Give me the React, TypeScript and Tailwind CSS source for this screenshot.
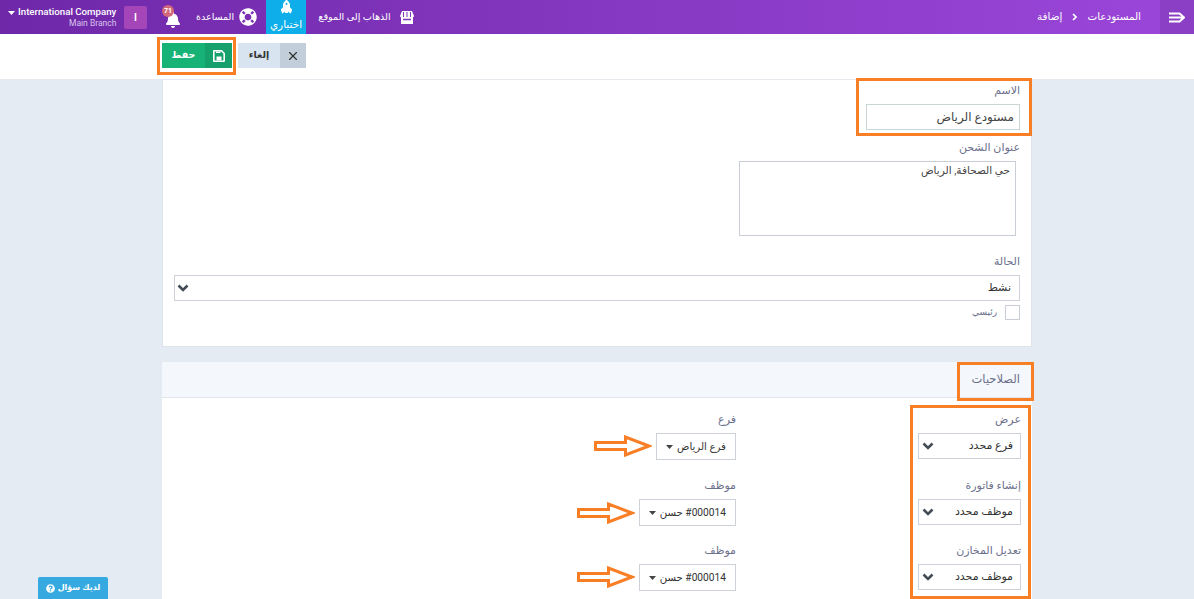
import { FaBell, FaLifeRing, FaQuestionCircle, FaRocket } from "react-icons/fa";
import { LuX } from "react-icons/lu";

const FONT = "font-['Roboto','DejaVu_Sans',sans-serif]";

function Chevron() {
  return (
    <svg width="12" height="8" viewBox="0 0 12 8" className="shrink-0">
      <path d="M1.500 1.500 6 6l4.500-4.500" fill="none" stroke="#444c58" strokeWidth="2.600" />
    </svg>
  );
}

function Caret({ color = "#444" }: { color?: string }) {
  return (
    <svg width="7" height="4" viewBox="0 0 7 4" className="shrink-0">
      <path d="M0 0h7L3.500 4z" fill={color} />
    </svg>
  );
}

function Label({ children }: { children: React.ReactNode }) {
  return <div className="whitespace-nowrap text-[11px] leading-[14px] text-[#6b6f8c]">{children}</div>;
}

function NativeSelect({ value, className }: { value: string; className: string }) {
  return (
    <div className={`flex items-center justify-between border border-[#cdd2d9] bg-white pr-[7px] pl-[3px] text-[11px] whitespace-nowrap text-[#333] ${className}`}>
      <span>{value}</span>
      <Chevron />
    </div>
  );
}

function Dropdown({ value, className }: { value: string; className: string }) {
  return (
    <div className={`flex items-center gap-[4px] border border-[#cdd2d9] bg-white pr-[9px] pl-[6px] text-[10.200px] whitespace-nowrap text-[#333] ${className}`}>
      <span>{value}</span>
      <Caret />
    </div>
  );
}

function PermRow({ label, value, subLabel, subValue, subWidth, className }: { label: string; value: string; subLabel: string; subValue: string; subWidth: string; className: string }) {
  return (
    <div className={`grid grid-cols-[285px_auto] ${className}`}>
      <div>
        <Label>{label}</Label>
        <NativeSelect value={value} className="mt-[6px] h-[26px] w-[103px]" />
      </div>
      <div>
        <Label>{subLabel}</Label>
        <Dropdown value={subValue} className={`mt-[6px] h-[27px] ${subWidth}`} />
      </div>
    </div>
  );
}

function Arrow({ className }: { className: string }) {
  return (
    <svg width="58" height="22" viewBox="0 0 58 22" className={`absolute ${className}`}>
      <path d="M1.500 7.500h30V2L55 11 31.500 20v-5.500h-30z" fill="#fff" stroke="#f97f26" strokeWidth="3" />
    </svg>
  );
}

function ShopIcon() {
  return (
    <svg width="14" height="13" viewBox="0 0 14 13">
      <path d="M2 0h10l2 5a1.500 1.500 0 0 1-1 1.300V13H1V6.300A1.500 1.500 0 0 1 0 5z" fill="#fff" />
      <path d="M3.500 1v5M7 1v5M10.500 1v5" stroke="#8037b8" strokeWidth="1" />
      <path d="M3 8.500h8" stroke="#8037b8" strokeWidth="1.500" />
    </svg>
  );
}

function TopBar() {
  return (
    <header className="flex h-[34px] items-stretch justify-between bg-gradient-to-r from-[#6f28a8] to-[#9b47da] text-white">
      <div className="flex items-stretch">
        <div className="ml-[8px] flex w-[108px] items-center gap-[3px]">
          <span className="-mt-[9px]"><Caret color="#fff" /></span>
          <div className="flex-1 text-right whitespace-nowrap">
            <div className="text-[9.700px] leading-[13px] font-medium">International Company</div>
            <div className="text-[8.500px] leading-[11px] text-[#d9c3ec]">Main Branch</div>
          </div>
        </div>
        <div className="mt-[6px] ml-[8px] flex h-[23px] w-[23px] items-center justify-center rounded-[2px] bg-[#a546b8] text-[10px] font-bold">I</div>
        <div className="relative ml-[16px] flex w-[20px] items-center justify-center">
          <FaBell size={16} className="mt-[5px]" />
          <span className="absolute top-[5px] -left-[1px] flex h-[12px] w-[12px] items-center justify-center rounded-full bg-[#d2697b] text-[7px] font-bold">71</span>
        </div>
        <div className="ml-[13px] flex items-center gap-[6px] whitespace-nowrap">
          <span className="w-[37px] text-center text-[9.500px]">المساعدة</span>
          <FaLifeRing size={18} />
        </div>
        <div className="ml-[9px] flex w-[40px] flex-col items-center bg-[#0eaeea] pt-[2px] text-[10.500px] leading-[14px] whitespace-nowrap">
          <FaRocket size={13} className="-rotate-45" />
          <span className="mt-[3px]">اختباري</span>
        </div>
        <div className="ml-[12px] flex items-center gap-[9px] whitespace-nowrap">
          <span className="w-[73px] text-center text-[9.700px]">الذهاب إلى الموقع</span>
          <ShopIcon />
        </div>
      </div>
      <div className="flex items-stretch">
        <div className="mr-[19px] flex items-center gap-[10px] text-[10.400px] whitespace-nowrap">
          <span>إضافة</span>
          <svg width="5" height="8" viewBox="0 0 5 8"><path d="M1 1l3 3-3 3" fill="none" stroke="#fff" strokeWidth="1.700" /></svg>
          <span>المستودعات</span>
        </div>
        <div className="flex w-[34px] items-center justify-center bg-[#8a3fc4]">
          <svg width="16" height="11" viewBox="0 0 16 11">
            <path d="M0 1.500h10M0 5.500h14M0 9.500h10M10 1l5 4.500-5 4.500" fill="none" stroke="#fff" strokeWidth="2" />
          </svg>
        </div>
      </div>
    </header>
  );
}

function Toolbar() {
  return (
    <div className="flex h-[46px] items-start gap-[6px] border-b border-[#e6e9ee] bg-white pt-[9px] pl-[162px]">
      <button className="flex h-[25px] w-[70px] items-stretch text-[9.500px] font-bold text-white">
        <span className="flex flex-1 items-center justify-center bg-[#17b276]">حفظ</span>
        <span className="flex w-[27px] items-center justify-center bg-[#16a06b]">
          <svg width="12" height="12" viewBox="0 0 12 12">
            <path d="M1 .8h7.500l2.700 2.700V11a.2.200 0 0 1-.2.200H1A.2.200 0 0 1 .8 11V1A.2.200 0 0 1 1 .8z" fill="none" stroke="#fff" strokeWidth="1.600" />
            <path d="M3.500 6.500h5v4h-5z" fill="#fff" />
            <path d="M3 1.500h4.500v1.500H3z" fill="#fff" />
          </svg>
        </span>
      </button>
      <button className="flex h-[25px] w-[68px] items-stretch text-[9.500px] font-bold text-[#333]">
        <span className="order-2 flex w-[26px] items-center justify-center bg-[#c2ced9]"><LuX size={14} /></span>
        <span className="flex flex-1 items-center justify-center bg-[#d8e4f0]">إلغاء</span>
      </button>
    </div>
  );
}

export default function App() {
  return (
    <div className={`relative h-[599px] overflow-hidden bg-[#e4ebf3] ${FONT}`}>
      <TopBar />
      <Toolbar />

      <main className="ml-[162px] w-[870px]">
        <section className="h-[267px] border-r border-b border-l border-[#dfe4ea] bg-white pt-[4px] pr-[11px] pl-[11px]">
          <div className="flex flex-col items-end">
            <Label>الاسم</Label>
            <div className="mt-[6px] flex h-[26px] w-[154px] items-center justify-end border border-[#c9d6d6] px-[5px] text-[12px] whitespace-nowrap text-[#444]">مستودع الرياض</div>
            <div className="mt-[11px]"><Label>عنوان الشحن</Label></div>
            <div className="mt-[6px] mr-[4px] h-[75px] w-[277px] border border-[#c9ced6] px-[5px] pt-[1px] text-right text-[10.500px] text-[#444]">حي الصحافة, الرياض</div>
            <div className="mt-[19px]"><Label>الحالة</Label></div>
            <div className="mt-[6px] flex h-[26px] w-full items-center justify-between border border-[#cdd2d9] pr-[8px] pl-[2px] text-[11px] text-[#333]">
              <Chevron />
              <span>نشط</span>
            </div>
            <div className="mt-[4px] flex items-center gap-[8px]">
              <span className="text-[9px] text-[#6b6f8c]">رئيسي</span>
              <span className="h-[15px] w-[15px] border border-[#c9ced6]" />
            </div>
          </div>
        </section>

        <section className="mt-[15px] h-[240px] bg-white">
          <div className="flex h-[36px] items-center justify-end border-b border-[#e2e7ed] bg-[#f4f7fb] pr-[12px] text-[11.500px] text-[#6b6f8c]">الصلاحيات</div>
          <div dir="rtl" className="pt-[15px] pr-[11px]">
            <PermRow label="عرض" value="فرع محدد" subLabel="فرع" subValue="فرع الرياض" subWidth="w-[80px]" className="" />
            <PermRow label="إنشاء فاتورة" value="موظف محدد" subLabel="موظف" subValue="#000014 حسن" subWidth="w-[97px]" className="mt-[19px]" />
            <PermRow label="تعديل المخازن" value="موظف محدد" subLabel="موظف" subValue="#000014 حسن" subWidth="w-[97px]" className="mt-[18px]" />
          </div>
        </section>
      </main>

      {/* ANNOTATIONS */}
      <div className="absolute top-[37px] left-[157px] h-[38px] w-[79px] border-[3px] border-[#f97f26]" />
      <div className="absolute top-[78px] left-[856px] h-[58px] w-[176px] border-[3px] border-[#f97f26]" />
      <div className="absolute top-[362px] left-[957px] h-[39px] w-[77px] border-[3px] border-[#f97f26]" />
      <div className="absolute top-[405px] left-[910px] h-[194px] w-[121px] border-[3px] border-[#f97f26]" />
      <Arrow className="top-[435px] left-[594px]" />
      <Arrow className="top-[502px] left-[577px]" />
      <Arrow className="top-[566px] left-[577px]" />

      <div className="absolute bottom-0 left-[38px] flex h-[22px] w-[70px] items-center justify-center gap-[3px] rounded-t-[2px] bg-[#36a9e1] text-[8px] font-bold whitespace-nowrap text-white">
        <FaQuestionCircle size={9} />
        <span>لديك سؤال</span>
      </div>
    </div>
  );
}
